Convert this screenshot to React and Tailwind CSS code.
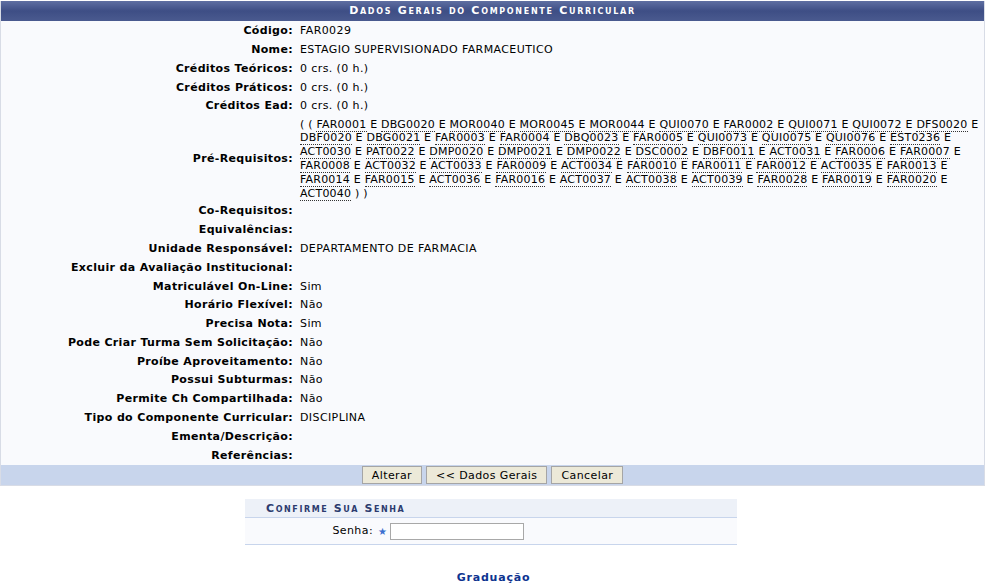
import React from 'react';

const font = { fontFamily: '"DejaVu Sans", Verdana, sans-serif' };

const preReq = [
    ['FAR0001', 'DBG0020', 'MOR0040', 'MOR0045', 'MOR0044', 'QUI0070', 'FAR0002', 'QUI0071', 'QUI0072', 'DFS0020'],
    ['DBF0020', 'DBG0021', 'FAR0003', 'FAR0004', 'DBQ0023', 'FAR0005', 'QUI0073', 'QUI0075', 'QUI0076', 'EST0236'],
    ['ACT0030', 'PAT0022', 'DMP0020', 'DMP0021', 'DMP0022', 'DSC0002', 'DBF0011', 'ACT0031', 'FAR0006', 'FAR0007'],
    ['FAR0008', 'ACT0032', 'ACT0033', 'FAR0009', 'ACT0034', 'FAR0010', 'FAR0011', 'FAR0012', 'ACT0035', 'FAR0013'],
    ['FAR0014', 'FAR0015', 'ACT0036', 'FAR0016', 'ACT0037', 'ACT0038', 'ACT0039', 'FAR0028', 'FAR0019', 'FAR0020'],
];

const before = [
    ['Código:', 'FAR0029'],
    ['Nome:', 'ESTAGIO SUPERVISIONADO FARMACEUTICO'],
    ['Créditos Teóricos:', '0 crs. (0 h.)'],
    ['Créditos Práticos:', '0 crs. (0 h.)'],
    ['Créditos Ead:', '0 crs. (0 h.)'],
];

const after = [
    ['Co-Requisitos:', ''],
    ['Equivalências:', ''],
    ['Unidade Responsável:', 'DEPARTAMENTO DE FARMACIA'],
    ['Excluir da Avaliação Institucional:', ''],
    ['Matriculável On-Line:', 'Sim'],
    ['Horário Flexível:', 'Não'],
    ['Precisa Nota:', 'Sim'],
    ['Pode Criar Turma Sem Solicitação:', 'Não'],
    ['Proíbe Aproveitamento:', 'Não'],
    ['Possui Subturmas:', 'Não'],
    ['Permite Ch Compartilhada:', 'Não'],
    ['Tipo do Componente Curricular:', 'DISCIPLINA'],
    ['Ementa/Descrição:', ''],
    ['Referências:', ''],
];

function Code({ c }) {
    return <span className="border-b border-dotted border-[#333]">{c}</span>;
}

function Row({ label, value }) {
    return (
        <div className="grid grid-cols-[295px_1fr] h-[18.8px] items-center">
            <div className="text-right font-bold pr-[3px] whitespace-nowrap tracking-[0.35px]">{label}</div>
            <div className="pl-[4px] whitespace-nowrap tracking-[0.4px]">{value}</div>
        </div>
    );
}

function Btn({ children }) {
    return (
        <button className="h-[18px] px-[9px] bg-[#ece9d8] border border-[#a5a5a5] text-[11px] leading-none text-black tracking-[0.4px]">
            {children}
        </button>
    );
}

export default function App() {
    return (
        <div className="w-[987px] h-[586px] bg-white text-[11px] text-black" style={font}>
            <div className="pt-[1px] w-[985px] ">
                <div className="border-x border-b border-[#d8dce6]">
                    <div className="h-[20px] bg-gradient-to-b from-[#5f6fa2] via-[#3e4e85] to-[#4a5a8f] text-white font-bold text-center leading-[20px] tracking-[1.7px] [font-variant:small-caps]">
                        Dados Gerais do Componente Curricular
                    </div>
                    <div className="bg-[#f9fafd] pt-[1px]">
                        {before.map(([l, v]) => (
                            <Row key={l} label={l} value={v} />
                        ))}
                        <div className="grid grid-cols-[295px_1fr] h-[86.2px] items-center">
                            <div className="text-right font-bold pr-[3px] tracking-[0.35px]">Pré-Requisitos:</div>
                            <div className="pl-[4px] leading-[13.8px] tracking-[0.22px]">
                                {preReq.map((line, i) => (
                                    <div key={i} className="whitespace-nowrap">
                                        {i === 0 ? '( ( ' : ''}
                                        {line.map((c) => (
                                            <React.Fragment key={c}>
                                                <Code c={c} /> E{' '}
                                            </React.Fragment>
                                        ))}
                                    </div>
                                ))}
                                <div className="whitespace-nowrap">
                                    <Code c="ACT0040" /> ) )
                                </div>
                            </div>
                        </div>
                        {after.map(([l, v]) => (
                            <Row key={l} label={l} value={v} />
                        ))}
                    </div>
                    <div className="h-[20px] bg-[#c8d5ec] flex items-center justify-center gap-[4px]">
                        <Btn>Alterar</Btn>
                        <Btn>&lt;&lt; Dados Gerais</Btn>
                        <Btn>Cancelar</Btn>
                    </div>
                </div>
            </div>

            <div className="mt-[13px] ml-[245px] w-[492px]">
                <div className="h-[19px] bg-[#edf1f8] border-b border-[#c8d5ec] pl-[21px] leading-[19px] font-bold text-[#2c3b6e] tracking-[1.6px] [font-variant:small-caps]">
                    Confirme Sua Senha
                </div>
                <div className="h-[27px] bg-[#f9fafd] border-b border-[#c8d5ec] flex items-center">
                    <div className="w-[131px] text-right pr-[3px] tracking-[0.4px]">Senha:</div>
                    <span className="text-[#3b6fd0] text-[10px] ml-[2px] mr-[3px]">★</span>
                    <input className="w-[134px] h-[17px] bg-white border border-[#a8a8a8] outline-none" type="password" />
                </div>
            </div>

            <div className="mt-[25px] text-center font-bold text-[#0d3390] tracking-[0.8px]">Graduação</div>
        </div>
    );
}
